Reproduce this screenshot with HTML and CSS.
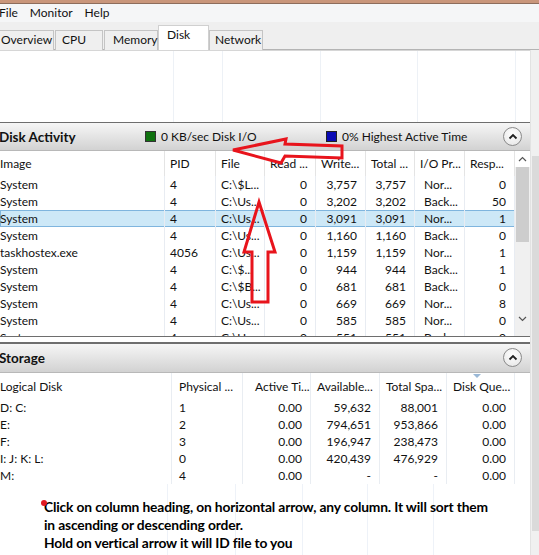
FILE: index.html
```html
<!DOCTYPE html>
<html>
<head>
<meta charset="utf-8">
<link rel="stylesheet" href="styles.css">
</head>
<body>
<div class="app">
  <div class="topband"></div>
  <div class="menubar"><span class="m-file">File</span><span>Monitor</span><span>Help</span></div>
  <div class="tabbar">
    <div class="tab t-over">Overview</div>
    <div class="tab t-cpu">CPU</div>
    <div class="tab t-mem">Memory</div>
    <div class="tab active t-disk">Disk</div>
    <div class="tab t-net">Network</div>
  </div>
  <div class="content">
    <div class="main">
      <div class="blank">
        <i class="vl" style="left:173px"></i><i class="vl" style="left:222px"></i><i class="vl" style="left:320px"></i><i class="vl" style="left:417px"></i><i class="vl" style="left:515px"></i>
      </div>

      <section class="panel disk">
        <div class="phead">
          <span class="ptitle">Disk Activity</span>
          <span class="legend l1"><i class="sq green"></i>0 KB/sec Disk I/O</span>
          <span class="legend l2"><i class="sq blue"></i>0% Highest Active Time</span>
          <span class="collapse"><svg width="10" height="7" viewBox="0 0 10 7"><path d="M1.5 5.5 L5 2 L8.5 5.5" fill="none" stroke="#222" stroke-width="1.8"/></svg></span>
        </div>
        <div class="pbody">
          <div class="list">
            <div class="row hdr">
              <div class="c first">Image</div><div class="c">PID</div><div class="c">File</div><div class="c">Read ...</div><div class="c">Write...</div><div class="c">Total ...</div><div class="c">I/O Pr...</div><div class="c">Resp...</div>
            </div>
            <div class="rows">
              <div class="row"><div class="c first">System</div><div class="c">4</div><div class="c">C:\$L...</div><div class="c r">0</div><div class="c r">3,757</div><div class="c r">3,757</div><div class="c io">Nor...</div><div class="c r">0</div></div>
              <div class="row"><div class="c first">System</div><div class="c">4</div><div class="c">C:\Us...</div><div class="c r">0</div><div class="c r">3,202</div><div class="c r">3,202</div><div class="c io">Back...</div><div class="c r">50</div></div>
              <div class="row sel"><div class="c first">System</div><div class="c">4</div><div class="c">C:\Us...</div><div class="c r">0</div><div class="c r">3,091</div><div class="c r">3,091</div><div class="c io">Nor...</div><div class="c r">1</div></div>
              <div class="row"><div class="c first">System</div><div class="c">4</div><div class="c">C:\Us...</div><div class="c r">0</div><div class="c r">1,160</div><div class="c r">1,160</div><div class="c io">Back...</div><div class="c r">0</div></div>
              <div class="row"><div class="c first">taskhostex.exe</div><div class="c">4056</div><div class="c">C:\Us...</div><div class="c r">0</div><div class="c r">1,159</div><div class="c r">1,159</div><div class="c io">Nor...</div><div class="c r">1</div></div>
              <div class="row"><div class="c first">System</div><div class="c">4</div><div class="c">C:\$...</div><div class="c r">0</div><div class="c r">944</div><div class="c r">944</div><div class="c io">Back...</div><div class="c r">1</div></div>
              <div class="row"><div class="c first">System</div><div class="c">4</div><div class="c">C:\$B...</div><div class="c r">0</div><div class="c r">681</div><div class="c r">681</div><div class="c io">Back...</div><div class="c r">0</div></div>
              <div class="row"><div class="c first">System</div><div class="c">4</div><div class="c">C:\Us...</div><div class="c r">0</div><div class="c r">669</div><div class="c r">669</div><div class="c io">Nor...</div><div class="c r">8</div></div>
              <div class="row"><div class="c first">System</div><div class="c">4</div><div class="c">C:\Us...</div><div class="c r">0</div><div class="c r">585</div><div class="c r">585</div><div class="c io">Nor...</div><div class="c r">0</div></div>
              <div class="row"><div class="c first">System</div><div class="c">4</div><div class="c">C:\Us...</div><div class="c r">0</div><div class="c r">551</div><div class="c r">551</div><div class="c io">Back...</div><div class="c r">0</div></div>
            </div>
          </div>
          <div class="vscroll">
            <div class="sbtn"><svg width="9" height="6" viewBox="0 0 9 6"><path d="M1 5 L4.5 1.5 L8 5" fill="none" stroke="#555" stroke-width="1.2"/></svg></div>
            <div class="thumb"></div>
            <div class="track"></div>
            <div class="sbtn"><svg width="9" height="6" viewBox="0 0 9 6"><path d="M1 1 L4.5 4.5 L8 1" fill="none" stroke="#555" stroke-width="1.2"/></svg></div>
          </div>
        </div>
      </section>

      <section class="panel storage">
        <div class="phead">
          <span class="ptitle">Storage</span>
          <span class="collapse"><svg width="10" height="7" viewBox="0 0 10 7"><path d="M1.5 5.5 L5 2 L8.5 5.5" fill="none" stroke="#222" stroke-width="1.8"/></svg></span>
        </div>
        <div class="slist">
          <div class="srow hdr">
            <div class="c first">Logical Disk</div><div class="c">Physical ...</div><div class="c act">Active Ti...</div><div class="c">Available...</div><div class="c">Total Spa...</div><div class="c sortc">Disk Que...<i class="sortmark"></i></div>
          </div>
          <div class="srow"><div class="c first">D: C:</div><div class="c">1</div><div class="c r">0.00</div><div class="c r">59,632</div><div class="c r">88,001</div><div class="c r">0.00</div></div>
          <div class="srow"><div class="c first">E:</div><div class="c">2</div><div class="c r">0.00</div><div class="c r">794,651</div><div class="c r">953,866</div><div class="c r">0.00</div></div>
          <div class="srow"><div class="c first">F:</div><div class="c">3</div><div class="c r">0.00</div><div class="c r">196,947</div><div class="c r">238,473</div><div class="c r">0.00</div></div>
          <div class="srow"><div class="c first">I: J: K: L:</div><div class="c">0</div><div class="c r">0.00</div><div class="c r">420,439</div><div class="c r">476,929</div><div class="c r">0.00</div></div>
          <div class="srow"><div class="c first">M:</div><div class="c">4</div><div class="c r">0.00</div><div class="c r">-</div><div class="c r">-</div><div class="c r">0.00</div></div>
        </div>
        <div class="below">
          <i class="vl" style="left:167px"></i><i class="vl" style="left:235px"></i><i class="vl" style="left:302px"></i><i class="vl" style="left:367px"></i><i class="vl" style="left:433px"></i>
          <div class="note">
            <i class="dot"></i>
            <p>Click on column heading, on horizontal arrow, any column. It will sort them<br>in ascending or descending order.<br>Hold on vertical arrow it will ID file to you</p>
          </div>
        </div>
      </section>
    </div>
    <div class="rightstrip"><div class="rs-thumb"></div></div>
  </div>

  <svg class="arrows" width="539" height="555" viewBox="0 0 539 555">
    <polygon points="233,150 286,139 285,144 342,146 342,158 285,156 281,163" fill="none" stroke="#e8141c" stroke-width="3" stroke-linejoin="miter"/>
    <polygon points="259,202 275,252 268,252 268,302 252,302 252,252 244,252" fill="none" stroke="#e8141c" stroke-width="3" stroke-linejoin="miter"/>
  </svg>
</div>
</body>
</html>
```
FILE: styles.css
```css
* { box-sizing: border-box; }
html, body { margin: 0; padding: 0; background: #fff; }
body { font-family: Lato, "Noto Sans", sans-serif; font-size: 12px; color: #111; }
.app { position: relative; width: 539px; height: 555px; overflow: hidden; display: flex; flex-direction: column; }

.topband { height: 4px; background: #c9967b; border-bottom: 1px solid #8d6d5c; flex: none; }
.menubar { height: 18px; background: #f5f6f7; display: flex; align-items: center; gap: 12px; flex: none; padding-left: 0; }
.menubar span { line-height: 18px; }
.menubar .m-file { margin-left: -1px; }

.tabbar { height: 28px; background: #efefef; position: relative; flex: none; border-bottom: 1px solid #b4b4b4; }
.tab { position: absolute; bottom: -1px; height: 20px; border: 1px solid #c4c4c4; border-bottom: none; background: #efefef; line-height: 18px; font-size: 12px; padding: 0 4px; }
.t-over { left: -2px; width: 56px; padding-left: 2px; }
.t-cpu { left: 55px; width: 48px; padding-left: 6px; }
.t-mem { left: 104px; width: 54px; padding-left: 8px; }
.t-disk { left: 158px; width: 51px; height: 25px; background: #fff; border-color: #d0d0d0; line-height: 18px; padding-left: 8px; z-index: 2; }
.t-net { left: 209px; width: 54px; padding-left: 5px; }

.content { flex: 1; display: flex; min-height: 0; }
.main { width: 530px; flex: none; display: flex; flex-direction: column; }
.rightstrip { flex: 1; background: #f0f0f0; border-left: 1px solid #e2e2e2; position: relative; }
.rs-thumb { position: absolute; left: 1px; right: 0; top: 106px; height: 375px; background: #dadada; }

.blank { height: 72px; position: relative; border-top: 1px solid #d6d6d6; flex: none; }
.vl { position: absolute; top: 0; bottom: 0; width: 1px; background: #edf1f6; }

.panel { display: flex; flex-direction: column; flex: none; }
.phead { height: 29px; border-top: 1px solid #6e6e6e; border-bottom: 1px solid #b8b8b8; background: linear-gradient(#f6f6f6, #d2d2d2); display: flex; align-items: center; position: relative; }
.ptitle { font-weight: bold; font-size: 13.5px; margin-left: -1px; }
.legend { position: absolute; top: 6px; display: flex; align-items: center; gap: 5px; font-size: 12px; }
.l1 { left: 145px; }
.l2 { left: 326px; }
.sq { display: inline-block; width: 11px; height: 11px; border: 1px solid #333; }
.sq.green { background: #139213; background-image: radial-gradient(#0b4d0b 0.6px, transparent 0.8px); background-size: 2px 2px; }
.sq.blue { background: #0a0ab4; border-color: #222; }
.collapse { position: absolute; left: 503px; top: 4px; width: 19px; height: 19px; border-radius: 50%; border: 1px solid #8a8a8a; background: radial-gradient(circle at 50% 35%, #ffffff, #e4e4e4); display: flex; align-items: center; justify-content: center; }

.disk { border-bottom: 1px solid #6e6e6e; margin-bottom: 5px; }
.pbody { height: 185px; display: flex; overflow: hidden; }
.list { width: 515px; }
.row { display: grid; grid-template-columns: 165px 51px 49px 51px 50px 49px 50px 50px; height: 17px; line-height: 17px; }
.row.hdr { height: 25px; line-height: 26px; }
.row .c, .srow .c { border-right: 1px solid #e8ecf2; padding-left: 5px; white-space: nowrap; overflow: hidden; }
.c.first { padding-left: 0; }
.c.r { text-align: right; padding-right: 8px; padding-left: 0; }
.c.io { padding-left: 9px; }
.row.hdr .c { border-right-color: #e4e4e4; }
.row.sel { background: #cde8f7; box-shadow: inset 0 0 0 1px #7fb5de; }
.rows { height: 160px; overflow: hidden; }

.vscroll { width: 15px; background: #f0f0f0; display: flex; flex-direction: column; height: 185px; }
.sbtn { height: 17px; display: flex; align-items: center; justify-content: center; flex: none; }
.vscroll .sbtn:first-child { height: 16px; background: #fff; }
.thumb { height: 75px; margin: 0 1px; background: #cdcdcd; flex: none; }
.track { flex: 1; }
.vscroll .sbtn:last-child { margin-bottom: 9px; }

.storage .phead { border-top: 2px solid #6e6e6e; height: 31px; }
.slist { width: 515px; }
.srow { display: grid; grid-template-columns: 172px 71px 68px 69px 67px 68px; height: 17px; line-height: 17px; }
.srow.hdr { height: 26px; line-height: 27px; position: relative; }
.srow .c.act { padding-left: 12px; }
.srow .c:nth-child(2) { padding-left: 7px; }
.srow.hdr .c:nth-child(4), .srow.hdr .c:nth-child(5), .srow.hdr .c:nth-child(6) { padding-left: 6px; }
.srow .c { border-right-color: #e9edf2; }
.sortc { position: relative; }
.sortmark { position: absolute; left: 26px; top: 1px; width: 0; height: 0; border-left: 4px solid transparent; border-right: 4px solid transparent; border-top: 4px solid #9ab8d6; }

.below { position: relative; height: 72px; }
.below .vl { background: #eef2f8; }
.note { position: absolute; left: 43px; top: 14px; }
.note p { margin: 0 0 0 1px; font-family: Lato, sans-serif; font-weight: bold; font-size: 13.8px; line-height: 18px; color: #000; letter-spacing: -0.15px; white-space: nowrap; }
.dot { position: absolute; left: -2px; top: 2px; width: 6px; height: 6px; border-radius: 50%; background: #e01b24; }

.arrows { position: absolute; left: 0; top: 0; pointer-events: none; }
```
